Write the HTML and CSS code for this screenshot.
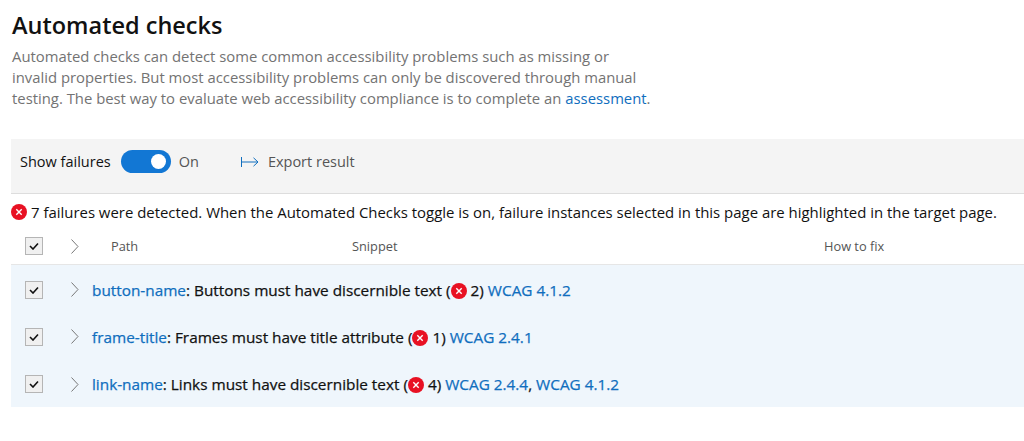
FILE: index.html
```html
<!DOCTYPE html>
<html lang="en">
<head>
  <meta charset="UTF-8" />
  <title>Automated checks</title>
  <link rel="stylesheet" href="styles.css">
</head>
<body>
  <h1>Automated checks</h1>
  <p class="intro">Automated checks can detect some common accessibility problems such as missing or<br>invalid properties. But most accessibility problems can only be discovered through manual<br>testing. The best way to evaluate web accessibility compliance is to complete an <a href="#">assessment</a>.</p>

  <!-- Barra de comandos -->
  <div class="command-bar">
    <span class="toggle-label">Show failures</span>
    <span class="toggle"><span class="toggle-knob"></span></span>
    <span class="toggle-state">On</span>
    <span class="export">
      <svg width="18" height="10" viewBox="0 0 18 10"><path d="M.5 0v10M1 5h16M12.500.8 17 5l-4.500 4.200" fill="none" stroke="#106ebe" stroke-width="1"/></svg>
      Export result
    </span>
  </div>

  <div class="summary">
    <svg class="fail-icon" width="16" height="16" viewBox="0 0 16 16"><circle cx="8" cy="8" r="8" fill="#e81123"/><path d="M5.300 5.300l5.400 5.400M10.700 5.300l-5.400 5.400" stroke="#fff" stroke-width="1.400"/></svg>
    <span>7 failures were detected. When the Automated Checks toggle is on, failure instances selected in this page are highlighted in the target page.</span>
  </div>

  <div class="table-head">
    <span class="check"><svg width="10" height="8" viewBox="0 0 10 8"><path d="M1 4l3 3 5-5.500" fill="none" stroke="#111" stroke-width="1.600"/></svg></span>
    <svg class="chevron" width="8" height="15" viewBox="0 0 8 15"><path d="M.5.500L7 7.500 .5 14.500" fill="none" stroke="#777" stroke-width="1"/></svg>
    <span class="col-path">Path</span>
    <span class="col-snippet">Snippet</span>
    <span class="col-fix">How to fix</span>
  </div>

  <div class="rows">
    <div class="row">
      <span class="check"><svg width="10" height="8" viewBox="0 0 10 8"><path d="M1 4l3 3 5-5.500" fill="none" stroke="#111" stroke-width="1.600"/></svg></span>
      <svg class="chevron" width="8" height="15" viewBox="0 0 8 15"><path d="M.5.500L7 7.500 .5 14.500" fill="none" stroke="#777" stroke-width="1"/></svg>
      <span class="rule"><a href="#">button-name</a>: Buttons must have discernible text (<svg class="fail-icon inline" width="16" height="16" viewBox="0 0 16 16"><circle cx="8" cy="8" r="8" fill="#e81123"/><path d="M5.300 5.300l5.400 5.400M10.700 5.300l-5.400 5.400" stroke="#fff" stroke-width="1.400"/></svg> 2) <a href="#">WCAG 4.1.2</a></span>
    </div>
    <div class="row">
      <span class="check"><svg width="10" height="8" viewBox="0 0 10 8"><path d="M1 4l3 3 5-5.500" fill="none" stroke="#111" stroke-width="1.600"/></svg></span>
      <svg class="chevron" width="8" height="15" viewBox="0 0 8 15"><path d="M.5.500L7 7.500 .5 14.500" fill="none" stroke="#777" stroke-width="1"/></svg>
      <span class="rule"><a href="#">frame-title</a>: Frames must have title attribute (<svg class="fail-icon inline" width="16" height="16" viewBox="0 0 16 16"><circle cx="8" cy="8" r="8" fill="#e81123"/><path d="M5.300 5.300l5.400 5.400M10.700 5.300l-5.400 5.400" stroke="#fff" stroke-width="1.400"/></svg> 1) <a href="#">WCAG 2.4.1</a></span>
    </div>
    <div class="row">
      <span class="check"><svg width="10" height="8" viewBox="0 0 10 8"><path d="M1 4l3 3 5-5.500" fill="none" stroke="#111" stroke-width="1.600"/></svg></span>
      <svg class="chevron" width="8" height="15" viewBox="0 0 8 15"><path d="M.5.500L7 7.500 .5 14.500" fill="none" stroke="#777" stroke-width="1"/></svg>
      <span class="rule"><a href="#">link-name</a>: Links must have discernible text (<svg class="fail-icon inline" width="16" height="16" viewBox="0 0 16 16"><circle cx="8" cy="8" r="8" fill="#e81123"/><path d="M5.300 5.300l5.400 5.400M10.700 5.300l-5.400 5.400" stroke="#fff" stroke-width="1.400"/></svg> 4) <a href="#">WCAG 2.4.4</a>, <a href="#">WCAG 4.1.2</a></span>
    </div>
  </div>
</body>
</html>
```

FILE: styles.css
```css
* { box-sizing: border-box; margin: 0; padding: 0; }
body {
  font-family: "Open Sans", "Noto Sans", sans-serif;
  background-color: #ffffff;
  color: #111;
  padding: 11px 0 0 11px;
  overflow: hidden;
}
a { color: #106ebe; text-decoration: none; }
h1 {
  font-size: 23.500px;
  line-height: 28px;
  font-weight: 600;
  margin-left: 1px;
}
.intro {
  margin: 7px 0 0 1px;
  font-size: 14.850px;
  line-height: 21px;
  color: #737373;
}

/* Barra de comandos */
.command-bar {
  margin-top: 30px;
  height: 55px;
  display: flex;
  align-items: center;
  padding: 0 0 9px 9px;
  background: #f4f4f4;
  border-bottom: 1px solid #ddd;
  font-size: 14.500px;
}
.toggle {
  width: 50px;
  height: 23px;
  margin-left: 10px;
  padding-right: 5px;
  border-radius: 12px;
  background: #1277d4;
  display: flex;
  align-items: center;
  justify-content: flex-end;
}
.toggle-knob {
  width: 15px;
  height: 15px;
  border-radius: 50%;
  background: #fff;
}
.toggle-state { margin-left: 8px; color: #555; }
.export {
  margin-left: 42px;
  display: flex;
  align-items: center;
  gap: 9px;
  color: #555;
}

.summary {
  height: 36px;
  display: flex;
  align-items: center;
  gap: 4px;
  font-size: 14.930px;
  white-space: nowrap;
}
.fail-icon { flex: none; }
.fail-icon.inline { vertical-align: -3px; }

/* Tabla */
.table-head, .row {
  display: flex;
  align-items: center;
  padding-left: 14px;
}
.table-head {
  height: 35px;
  padding-bottom: 2px;
  font-size: 12.800px;
  color: #555;
  border-bottom: 1px solid #e6e6e6;
}
.check {
  width: 18px;
  height: 18px;
  flex: none;
  background: #f0f0f0;
  border: 1px solid #b5b5b5;
  display: flex;
  align-items: center;
  justify-content: center;
}
.chevron { flex: none; margin-left: 28px; }
.col-path { margin-left: 32px; width: 241px; }
.col-snippet { width: 472px; }
.rows {
  height: 142px;
  padding-top: 1px;
  background: #eff6fc;
  display: grid;
  grid-template-rows: repeat(3, 47.300px);
}
.row { font-size: 15.330px; -webkit-text-stroke: 0.25px; white-space: nowrap; }
.rule { margin-left: 13px; }
```
